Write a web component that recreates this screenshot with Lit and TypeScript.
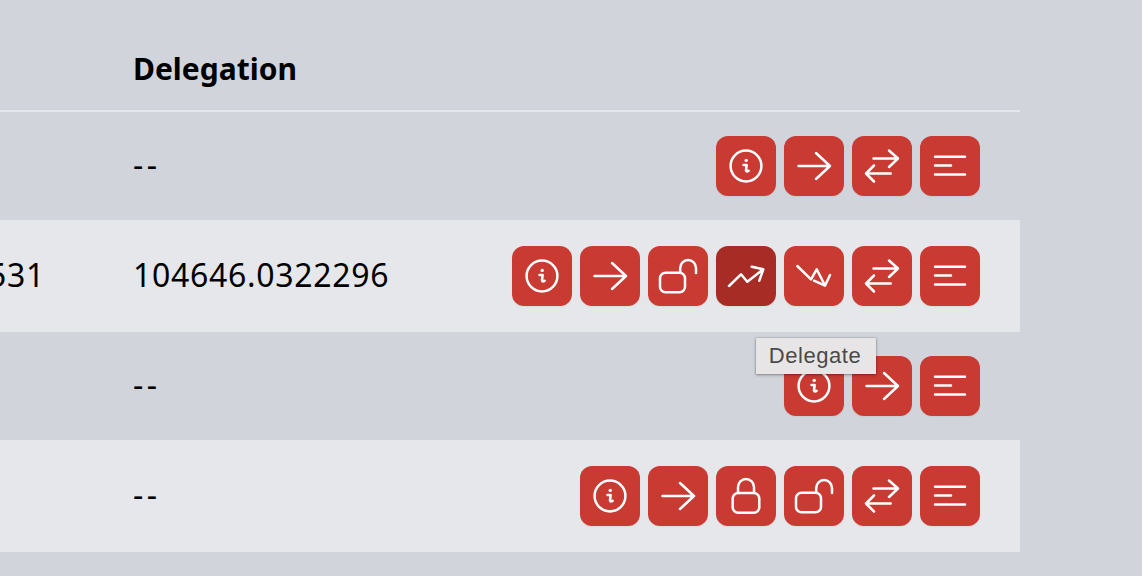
import { LitElement, html, css, svg } from "lit";
import { customElement } from "lit/decorators.js";

const ICONS: Record<string, unknown> = {
  info: svg`<circle cx="30" cy="30" r="15.4"/><circle class="fill" cx="30.2" cy="24.4" r="1.7"/><path class="thick" d="M27.6 29h3l-.6 5.6c0 1.2 1.4 1.2 2.6.2"/>`,
  arrow: svg`<path d="M14.5 30H46M32 17l14 13-14 13"/>`,
  swap: svg`<path d="M21.5 22.5H46M37 14.5l9 8-9 8.500M38.700 37.500H14M22 29.500l-8 8 8 8"/>`,
  menu: svg`<path d="M15 20.700H45M15 29.500H31M15 38.500H45"/>`,
  lockOpen: svg`<rect x="12" y="26.800" width="25" height="19.500" rx="5.500"/><path d="M32.200 26.500V22a7.900 7.900 0 0 1 15.800 0v5"/>`,
  lock: svg`<rect x="16.700" y="27" width="26.600" height="19.700" rx="5.500"/><path d="M22 27v-6a8 8 0 0 1 16 0v6"/>`,
  up: svg`<path d="M13 40l12-11.700 6.300 7.400 16-12.400M35.700 20.700l11.600 2.600-4 11.400"/>`,
  down: svg`<path d="M13.300 20L27 33.300l5.700-10L41 39.500M30 34.700l11 5 5-10.700"/>`,
};

interface Row {
  cls: string;
  lead: string;
  value: string;
  actions: string[];
}

const ROWS: Row[] = [
  { cls: "r1", lead: "", value: "--", actions: ["info", "arrow", "swap", "menu"] },
  { cls: "r2", lead: "5531", value: "104646.0322296", actions: ["info", "arrow", "lockOpen", "up", "down", "swap", "menu"] },
  { cls: "r3", lead: "", value: "--", actions: ["info", "arrow", "menu"] },
  { cls: "r4", lead: "", value: "--", actions: ["info", "arrow", "lock", "lockOpen", "swap", "menu"] },
];

@customElement("app-root")
export class AppRoot extends LitElement {
  static styles = css`
    :host {
      display: block;
      height: 576px;
      background: #d1d5db;
      overflow: hidden;
      position: relative;
      font-family: "Noto Sans", "Open Sans", sans-serif;
      color: #000;
    }
    .table {
      width: 1020px;
    }
    .row {
      display: grid;
      grid-template-columns: 133px 1fr auto;
      align-items: center;
      padding-right: 40px;
    }
    .head {
      border-bottom: 2px solid #e5e7eb;
      font-size: 30px;
      font-weight: 700;
      padding-top: 26px;
      height: 84px;
    }
    .r1 { height: 108px; }
    .r2 { height: 112px; background: #e5e7eb; }
    .r3 { height: 108px; }
    .r4 { height: 112px; background: #e5e7eb; }
    .lead {
      display: flex;
      justify-content: flex-end;
      overflow: hidden;
      padding-right: 88px;
      white-space: nowrap;
    }
    .val {
      font-size: 32px;
      letter-spacing: 0.7px;
      white-space: nowrap;
      padding-bottom: 4px;
    }
    .val.dash {
      letter-spacing: 3.5px;
    }
    .actions {
      display: flex;
      gap: 8px;
    }
    .btn {
      width: 60px;
      height: 60px;
      border-radius: 12px;
      background: #c93a32;
      box-shadow: 0 1px 2px rgba(0, 0, 0, 0.05);
      display: block;
    }
    .btn.active {
      background: #a72c25;
    }
    .btn svg {
      display: block;
      fill: none;
      stroke: #fff;
      stroke-width: 2.5;
      stroke-linecap: round;
      stroke-linejoin: round;
    }
    .btn svg .fill {
      fill: #fff;
      stroke: none;
    }
    .btn svg .thick {
      stroke-width: 2.6;
    }
    .tooltip {
      position: absolute;
      left: 756px;
      top: 338px;
      width: 120px;
      height: 36px;
      box-sizing: border-box;
      padding-right: 2px;
      display: flex;
      align-items: center;
      justify-content: center;
      background: #e7e5e5;
      color: #4a4a4a;
      font-family: "Liberation Sans", Arial, sans-serif;
      font-size: 22px;
      letter-spacing: 0.55px;
      box-shadow: 0 1px 3px rgba(0, 0, 0, 0.35), 0 0 0 1px rgba(0, 0, 0, 0.06);
    }
  `;

  render() {
    return html`
      <div class="table">
        <div class="row head"><span></span><span>Delegation</span><span></span></div>
        ${ROWS.map(
          (r) => html`
            <div class="row ${r.cls}">
              <div class="lead val">${r.lead}</div>
              <div class="val ${r.value === "--" ? "dash" : ""}">${r.value}</div>
              <div class="actions">
                ${r.actions.map(
                  (a) => html`<div class="btn ${a === "up" ? "active" : ""}">
                    <svg width="60" height="60" viewBox="0 0 60 60">${ICONS[a]}</svg>
                  </div>`
                )}
              </div>
            </div>
          `
        )}
      </div>
      <div class="tooltip">Delegate</div>
    `;
  }
}
